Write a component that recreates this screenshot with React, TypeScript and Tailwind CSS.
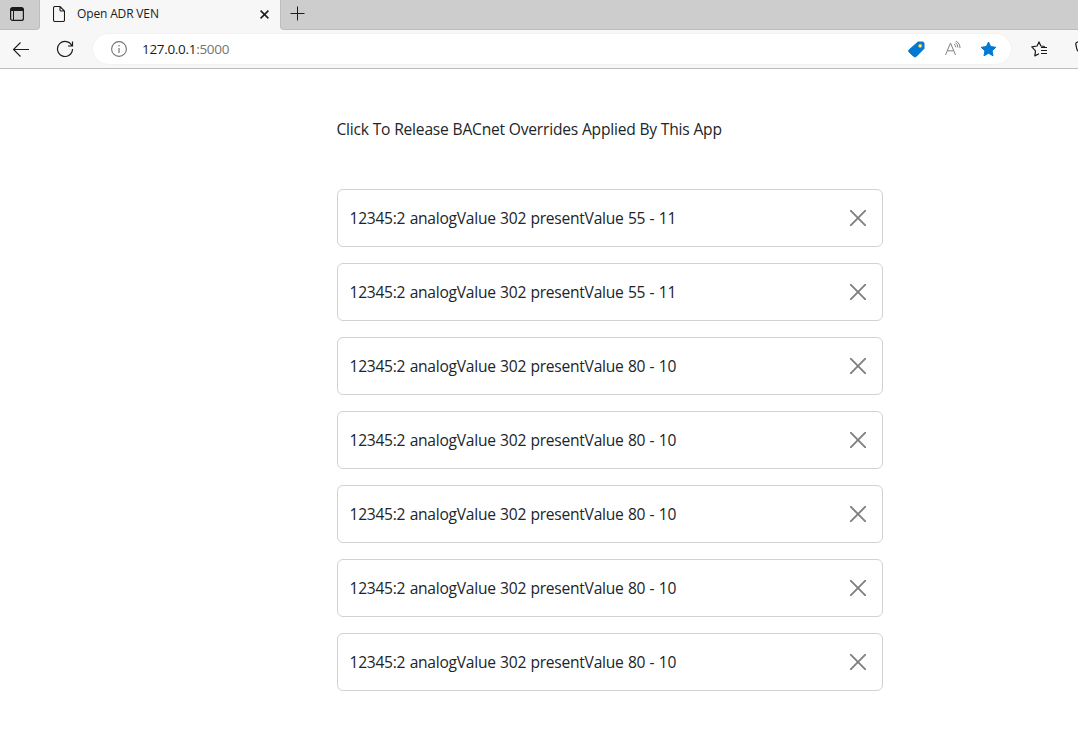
import React from "react";

const overrides = [
  "12345:2 analogValue 302 presentValue 55 - 11",
  "12345:2 analogValue 302 presentValue 55 - 11",
  "12345:2 analogValue 302 presentValue 80 - 10",
  "12345:2 analogValue 302 presentValue 80 - 10",
  "12345:2 analogValue 302 presentValue 80 - 10",
  "12345:2 analogValue 302 presentValue 80 - 10",
  "12345:2 analogValue 302 presentValue 80 - 10",
];

type IconProps = { className: string; box: string; children: React.ReactNode };

function Icon({ className, box, children }: IconProps) {
  return (
    <svg className={`block shrink-0 ${className}`} viewBox={box} fill="none" stroke="currentColor">
      {children}
    </svg>
  );
}

function TabStrip() {
  return (
    <div className="flex h-[30px] bg-[#f7f7f7]">
      <div className="flex w-10 items-start rounded-br-[4px] border-r border-b border-[#bdbdbd] bg-[#cdcdcd] pt-[7px] pl-[10px]">
        <Icon className="h-[14px] w-[14px] text-[#1b1b1b]" box="0 0 14 14">
          <rect x="0.6" y="0.6" width="12.8" height="12.8" rx="2" strokeWidth="1.2" />
          <path d="M1 1h12v3H1z" fill="currentColor" stroke="none" />
          <path d="M3.5 4v9.5" strokeWidth="1" />
        </Icon>
      </div>
      <div className="flex w-60 pl-[13px]">
        <Icon className="mt-[6px] h-4 w-3 text-[#1b1b1b]" box="0 0 12 16">
          <path d="M2 .5h5L11.5 5v9a1.5 1.5 0 0 1-1.5 1.5H2A1.5 1.5 0 0 1 .5 14V2A1.5 1.5 0 0 1 2 .5zM7 .5V4a1 1 0 0 0 1 1h3.5" strokeWidth="1.1" />
        </Icon>
        <span className="mt-[5px] ml-3 w-[183px] text-[12px] leading-[18px] tracking-[-0.15px] whitespace-nowrap text-[#1b1b1b]">
          Open ADR VEN
        </span>
        <Icon className="mt-[10px] h-[9px] w-[9px] text-[#1b1b1b]" box="0 0 9 9">
          <path d="M.6.6l7.8 7.8M8.4.6L.6 8.4" strokeWidth="1.5" />
        </Icon>
      </div>
      <div className="flex flex-1 rounded-bl-[4px] border-b border-l border-[#bdbdbd] bg-[#cdcdcd] pt-[6px] pl-[9px]">
        <Icon className="h-[15px] w-[15px] text-[#1b1b1b]" box="0 0 15 15">
          <path d="M7.5 .5v14M.5 7.5h14" strokeWidth="1" />
        </Icon>
      </div>
    </div>
  );
}

function Toolbar() {
  return (
    <div className="flex h-[39px] items-center overflow-hidden border-b border-[#bdbdbd] bg-[#f7f7f7] pl-3">
      <Icon className="-mt-px h-4 w-[17px] text-[#1b1b1b]" box="0 0 17 16">
        <path d="M8.5 1.5L1.5 8.5l7 7M1.5 8.5H17" strokeWidth="1.1" />
      </Icon>
      <Icon className="ml-[27px] h-[18px] w-[18px] text-[#1b1b1b]" box="0 0 18 18">
        <path d="M15.9 6A7.5 7.5 0 1 0 16.5 9M16.5 1.5V6H12" strokeWidth="1.2" />
      </Icon>
      <div className="ml-[19px] flex h-[30px] w-[918px] shrink-0 items-center rounded-full bg-white pl-[18px] shadow-[0_0_2px_#e6e6e6]">
        <Icon className="h-4 w-4 text-[#737373]" box="0 0 16 16">
          <circle cx="8" cy="8" r="7.4" strokeWidth="1.1" />
          <path d="M8 7v5" strokeWidth="1.2" />
          <circle cx="8" cy="4.7" r=".8" fill="currentColor" stroke="none" />
        </Icon>
        <span className="ml-[15px] w-[766px] text-[13.5px] leading-[18px] tracking-[-0.31px] whitespace-nowrap text-[#1b1b1b]">
          127.0.0.1<span className="text-[#737373]">:5000</span>
        </span>
        <Icon className="h-[17px] w-[17px] text-[#0078d4]" box="0 0 17 17">
          <path d="M10 1h4.5A1.5 1.5 0 0 1 16 2.5V7.5L8.4 15.3a2 2 0 0 1-2.8 0L1.2 11.2a1.6 1.6 0 0 1 0-2.4z" fill="currentColor" strokeWidth="1" />
          <circle cx="12.2" cy="4.8" r="1.6" fill="#fff2c2" stroke="#e8b007" strokeWidth="1" />
        </Icon>
        <Icon className="-mt-px ml-5 h-[15px] w-4 text-[#808080]" box="0 0 16 15">
          <path d="M.5 14L5.5 2l5 12M2.4 9.8h6.2M9 3.2a3.5 3.5 0 0 1 1.8 3.1M10.2 1.5a5.8 5.8 0 0 1 2.7 5M11 .1a8 8 0 0 1 4 7" strokeWidth="1" />
        </Icon>
        <Icon className="ml-[19px] h-4 w-[17px] text-[#0078d4]" box="0 0 17 16">
          <path d="M8.5 1l2.2 4.6 5.1.7-3.7 3.5.9 5L8.5 12.3 4 14.8l.9-5L1.2 6.3l5.1-.7z" fill="currentColor" strokeWidth="1" strokeLinejoin="round" />
        </Icon>
      </div>
      <Icon className="-mt-px ml-5 h-4 w-[17px] text-[#1b1b1b]" box="0 0 17 16">
        <path d="M13.8 5.5L9.9 5 8 .9 6.1 5 .8 5.9l3.7 3.9-.7 5.1L8 12.8" strokeWidth="1.2" strokeLinejoin="round" />
        <path d="M10 6.5h6M10 9.5h6M10 12.5h6" strokeWidth="1.2" />
      </Icon>
      <Icon className="-mt-[3px] ml-[27px] h-[13px] w-[13px] text-[#1b1b1b]" box="0 0 13 13">
        <path d="M4 .6L2 1.2Q.5 1.7.8 3.5l1 4.4Q2.2 10 4 10.5L9 12.4M4 .6h8" strokeWidth="1.2" />
      </Icon>
    </div>
  );
}

function OverrideRow({ label }: { label: string }) {
  return (
    <li className="flex h-[58px] items-center justify-between rounded-[6px] border border-[#d2d2d2] bg-white pr-4 pl-[11.5px]">
      <span className="text-[15.6px] leading-6 tracking-[-0.26px] [word-spacing:0.6px] whitespace-nowrap">{label}</span>
      <button type="button" aria-label="Release">
        <Icon className="h-4 w-4 text-[#808080]" box="0 0 16 16">
          <path d="M.7.7l14.6 14.6M15.3.7L.7 15.3" strokeWidth="1.9" strokeLinecap="round" />
        </Icon>
      </button>
    </li>
  );
}

export default function App() {
  return (
    <div className="h-[733px] w-[1078px] overflow-hidden bg-white font-['Open_Sans','Noto_Sans',sans-serif] text-[#212529]">
      <TabStrip />
      <Toolbar />
      <main className="ml-[337px] w-[546px] pt-12">
        <p className="-ml-[0.5px] text-[15.6px] leading-6 tracking-[-0.2px] whitespace-nowrap">
          Click To Release BACnet Overrides Applied By This App
        </p>
        <ul className="mt-12 flex flex-col gap-4">
          {overrides.map((label, i) => (
            <OverrideRow key={i} label={label} />
          ))}
        </ul>
      </main>
    </div>
  );
}
